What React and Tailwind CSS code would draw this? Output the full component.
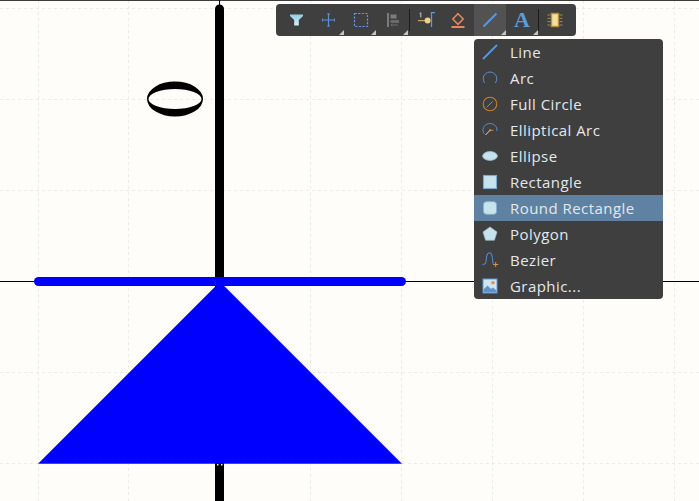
function Tri() {
  return <span className="absolute right-0 bottom-[1px] w-0 h-0 border-l-[5px] border-l-transparent border-b-[5px] border-b-[#c4c4c4]" />;
}

function Btn({ children, tri, active }) {
  return (
    <div className={`relative w-8 h-8 flex items-center justify-center shrink-0 ${active ? "bg-[#525252]" : ""}`}>
      {children}
      {tri && <Tri />}
    </div>
  );
}

const Sep = () => <div className="w-px h-[22px] bg-[#1c1c1c] shrink-0" />;

const I = ({ children, w = 18, h = 18 }) => (
  <svg width={w} height={h} viewBox={`0 0 ${w} ${h}`} className="block">{children}</svg>
);

const toolIcons = {
  filter: (
    <I>
      <defs>
        <linearGradient id="fg" x1="0" y1="0" x2="0" y2="1">
          <stop offset="0" stopColor="#8fd0e8" />
          <stop offset="1" stopColor="#d8f0f6" />
        </linearGradient>
      </defs>
      <path d="M3 3.500h13v1.600l-4.200 4v5.400l-4.600 0v-5.400l-4.200-4z" fill="url(#fg)" />
    </I>
  ),
  cross: (
    <I>
      <path d="M9.500 2.500v13M3 9h13" stroke="#5f8fd6" strokeWidth="1.200" />
      <path d="M8.100 3h2.800M8.100 15h2.800M3.500 7.600v2.800M15.500 7.600v2.800" stroke="#5f8fd6" strokeWidth="1" />
    </I>
  ),
  select: (
    <I>
      <rect x="3.500" y="2.500" width="13" height="13" fill="none" stroke="#6c93e2" strokeWidth="1.200" strokeDasharray="2.200 1.400" />
    </I>
  ),
  align: (
    <I>
      <path d="M5 2v14" stroke="#7c7c7c" strokeWidth="2" />
      <rect x="7.500" y="3.500" width="6" height="4" fill="#7c7c7c" />
      <rect x="7.500" y="9" width="8.500" height="3" fill="#6a6a6a" />
      <path d="M8 14h7M8 14l1.500-1.200M8 14l1.500 1.200" stroke="#6e6e6e" strokeWidth="1" fill="none" />
    </I>
  ),
  pin: (
    <I w={20}>
      <path d="M2 9.600h8" stroke="#c8a55a" strokeWidth="1.200" />
      <path d="M3.600 2.600l1.200-.800v4.700" stroke="#c9c9c9" strokeWidth="1" fill="none" />
      <circle cx="11.600" cy="9.600" r="3" fill="#ecd08e" />
      <path d="M19 1.600h-3.500v14.500" stroke="#5f97dd" strokeWidth="1.300" fill="none" />
    </I>
  ),
  erase: (
    <I>
      <path d="M9 2.700l5.200 5.400L9 13.400 3.800 8.100z" fill="none" stroke="#e8875f" strokeWidth="1.500" />
      <rect x="2.500" y="15" width="13" height="2" fill="#e8875f" />
    </I>
  ),
  line: (
    <I>
      <path d="M2.500 15.500L15.500 2.500" stroke="#5c97dc" strokeWidth="2" />
    </I>
  ),
  chip: (
    <I>
      <path d="M1.500 4h3M1.500 7.300h3M1.500 10.600h3M1.500 14h3M13.500 4h3M13.500 7.300h3M13.500 10.600h3M13.500 14h3" stroke="#a98b48" strokeWidth="1" />
      <rect x="5.500" y="2.500" width="7" height="13" fill="#f6de9f" stroke="#b7923e" strokeWidth="1.400" />
    </I>
  ),
};

const menu = [
  { label: "Line", icon: <path d="M2 16L16 2" stroke="#5c97dc" strokeWidth="1.800" /> },
  { label: "Arc", icon: <path d="M3.650 14A6.800 6.800 0 1 1 14.350 14" fill="none" stroke="#5c8fd0" strokeWidth="1" /> },
  {
    label: "Full Circle",
    icon: (
      <>
        <circle cx="9" cy="9" r="6.800" fill="none" stroke="#c87f2a" strokeWidth="1.100" />
        <path d="M5.800 12.200L11.500 6.500" stroke="#6c93c8" strokeWidth="1" />
      </>
    ),
  },
  {
    label: "Elliptical Arc",
    icon: (
      <>
        <path d="M3.300 12.770A7 6.500 0 1 1 15.900 10.080" fill="none" stroke="#5c8fd0" strokeWidth="1" />
        <path d="M4.500 14L9 9.300" stroke="#e0d8c8" strokeWidth="1" />
        <path d="M9 9.300h3.500" stroke="#c87f2a" strokeWidth="1" />
        <circle cx="9" cy="9.300" r="1" fill="#e89a4a" />
      </>
    ),
  },
  { label: "Ellipse", icon: <ellipse cx="9" cy="9" rx="7.400" ry="4.400" fill="#c6e3ee" stroke="#9cc0d4" strokeWidth="0.800" /> },
  { label: "Rectangle", icon: <rect x="2.500" y="2.500" width="13" height="13" fill="#c6e3ee" stroke="#7fa8cc" strokeWidth="1.100" /> },
  {
    label: "Round Rectangle",
    active: true,
    icon: <rect x="2.500" y="2.700" width="13" height="12.600" rx="3" fill="#c6e3ee" stroke="#8cb2ce" strokeWidth="0.900" />,
  },
  { label: "Polygon", icon: <path d="M9 2l7 5-2.600 8.200H4.600L2 7z" fill="#c6e3ee" stroke="#9cc0d4" strokeWidth="0.700" /> },
  {
    label: "Bezier",
    icon: (
      <>
        <path d="M1.500 13.500C4.500 13.500 5 12 5.300 8C5.600 3 6.500 1.800 8.500 1.800S11.200 3 11.500 8C11.700 12 12 13.500 13 13.800" fill="none" stroke="#5586c8" strokeWidth="1.100" />
        <path d="M14.700 11v5M12.200 13.500h5" stroke="#e8922e" strokeWidth="1" />
      </>
    ),
  },
  {
    label: "Graphic...",
    icon: (
      <>
        <rect x="2" y="2" width="14" height="14" fill="#cfe6f2" stroke="#5c97dc" strokeWidth="1" />
        <circle cx="12" cy="5.700" r="1.800" fill="#ea8f4a" />
        <path d="M2.500 15.500v-3l4-4 3.500 3.500 2-1.500 3.500 3v2z" fill="#5f93c8" />
      </>
    ),
  },
];

const gridX = [38.5, 128.5, 219.5, 310.5, 401.5, 492.5, 583.5, 674.5];
const gridY = [8.5, 99.5, 190.5, 281.5, 372.5, 463.5];

export default function App() {
  return (
    <div className="relative w-[699px] h-[501px] overflow-hidden bg-[#fffdf9] font-['Open_Sans','Noto_Sans',sans-serif]">
      <svg width="699" height="501" viewBox="0 0 699 501" className="block">
        {gridX.map((x) => (
          <path key={x} d={`M${x} 0V501`} stroke="#eeece6" strokeWidth="1" strokeDasharray="3 3" />
        ))}
        {gridY.map((y) => (
          <path key={y} d={`M0 ${y}H699`} stroke="#eeece6" strokeWidth="1" strokeDasharray="3 3" />
        ))}
        <rect x="0" y="0" width="699" height="1" fill="#3c3c3c" />
        <path d="M0 281.500H699" stroke="#000" strokeWidth="1" />
        <path d="M219.500 0V5" stroke="#000" strokeWidth="1" />
        <path d="M219.500 9V501" stroke="#000" strokeWidth="9" strokeLinecap="round" />
        <path
          fillRule="evenodd"
          fill="#000"
          d="M147 99A28 17.500 0 1 1 203 99A28 17.500 0 1 1 147 99ZM148.500 99A26.500 10 0 1 0 201.500 99A26.500 10 0 1 0 148.500 99Z"
        />
        <path d="M38 463.800L220 281.800L402 463.800Z" fill="#0000ff" />
        <path d="M38.500 281.500H401.500" stroke="#0000ff" strokeWidth="9" strokeLinecap="round" />
        <rect x="217" y="464" width="1.500" height="1.500" fill="#fffdf9" />
        <rect x="221" y="464" width="1.500" height="1.500" fill="#fffdf9" />
      </svg>

      <div className="absolute left-[276px] top-1 w-[300px] h-8 rounded-[4px] bg-[#3f3f3f] flex items-center pl-1">
        <Btn>{toolIcons.filter}</Btn>
        <Btn tri>{toolIcons.cross}</Btn>
        <Btn tri>{toolIcons.select}</Btn>
        <Btn tri>{toolIcons.align}</Btn>
        <div className="ml-px" />
        <Sep />
        <Btn>{toolIcons.pin}</Btn>
        <Btn>{toolIcons.erase}</Btn>
        <Btn tri active>{toolIcons.line}</Btn>
        <Btn tri>
          <span className="font-['Liberation_Serif',serif] font-bold text-[22px] leading-none text-[#5b9bdc]">A</span>
        </Btn>
        <Sep />
        <Btn>{toolIcons.chip}</Btn>
      </div>

      <div className="absolute left-[474px] top-[39px] w-[189px] rounded-[4px] overflow-hidden bg-[#3f3f3f]">
        {menu.map((m) => (
          <div key={m.label} className={`h-[26px] flex items-center pl-[7px] ${m.active ? "bg-[#5f82a3]" : ""}`}>
            <svg width="18" height="18" viewBox="0 0 18 18" className="block shrink-0">{m.icon}</svg>
            <span className="ml-[11px] text-[15px] tracking-[0.45px] leading-none whitespace-nowrap text-[#e2e8ee]">{m.label}</span>
          </div>
        ))}
      </div>
    </div>
  );
}
